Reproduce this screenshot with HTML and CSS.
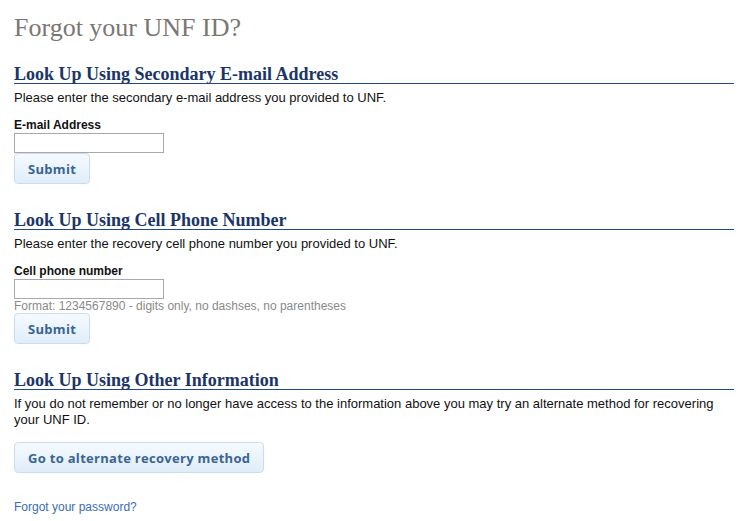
FILE: index.html
```html
<!DOCTYPE html>
<html>
<head>
<meta charset="utf-8">
<link rel="stylesheet" href="styles.css">
</head>
<body>
<main class="page">
  <h1 class="title">Forgot your UNF ID?</h1>

  <section class="section">
    <h2 class="section-head">Look Up Using Secondary E-mail Address</h2>
    <p class="intro">Please enter the secondary e-mail address you provided to UNF.</p>
    <label class="field-label" for="email">E-mail Address</label>
    <input class="field" id="email" type="text">
    <button class="btn" type="button">Submit</button>
  </section>

  <section class="section">
    <h2 class="section-head">Look Up Using Cell Phone Number</h2>
    <p class="intro">Please enter the recovery cell phone number you provided to UNF.</p>
    <label class="field-label" for="phone">Cell phone number</label>
    <input class="field" id="phone" type="text">
    <div class="hint">Format: 1234567890 - digits only, no dashses, no parentheses</div>
    <button class="btn" type="button">Submit</button>
  </section>

  <section class="section">
    <h2 class="section-head">Look Up Using Other Information</h2>
    <p class="intro">If you do not remember or no longer have access to the information above you may try an alternate method for recovering your UNF ID.</p>
    <button class="btn btn-wide" type="button">Go to alternate recovery method</button>
  </section>

  <a class="link" href="#">Forgot your password?</a>
</main>
</body>
</html>
```

FILE: styles.css
```css
html, body {
  margin: 0;
  padding: 0;
  background: #ffffff;
}

.page {
  width: 720px;
  padding: 13px 14px 0 14px;
  display: flex;
  flex-direction: column;
  align-items: flex-start;
  font-family: "Liberation Sans", Arial, sans-serif;
  font-size: 13px;
  color: #111111;
}

.title {
  margin: 0;
  font-family: "Liberation Serif", "Times New Roman", serif;
  font-weight: normal;
  font-size: 26px;
  line-height: 30px;
  color: #7a7773;
}

.section {
  align-self: stretch;
  display: flex;
  flex-direction: column;
  align-items: flex-start;
  margin-top: 27px;
}

.section:first-of-type {
  margin-top: 22px;
}

.section-head {
  align-self: stretch;
  margin: 0;
  font-family: "Liberation Serif", "Times New Roman", serif;
  font-weight: bold;
  font-size: 18px;
  line-height: 18px;
  color: #1b3567;
  border-bottom: 1px solid #1f4b8a;
}

.intro {
  margin: 6px 0 0 0;
  line-height: 16px;
}

.field-label {
  margin-top: 12px;
  font-weight: bold;
  font-size: 12px;
  line-height: 15px;
}

.field {
  box-sizing: border-box;
  width: 150px;
  height: 20px;
  margin: 0;
  border: 1px solid #a9a9a9;
  padding: 0 2px;
  background: #fff;
}

.hint {
  font-size: 12px;
  line-height: 14px;
  color: #8a8a8a;
}

.btn {
  box-sizing: border-box;
  height: 31px;
  margin: 0;
  padding: 0 13px;
  border: 1px solid #c9ddef;
  border-radius: 4px;
  background: linear-gradient(#f6faff, #dfedf9);
  font-family: "Open Sans", sans-serif;
  font-weight: bold;
  font-size: 13px;
  color: #3a6590;
  letter-spacing: 0.3px;
}

.btn-wide {
  margin-top: 14px;
}

.link {
  margin-top: 27px;
  font-size: 12px;
  line-height: 14px;
  color: #3a6db3;
  text-decoration: none;
}
```
